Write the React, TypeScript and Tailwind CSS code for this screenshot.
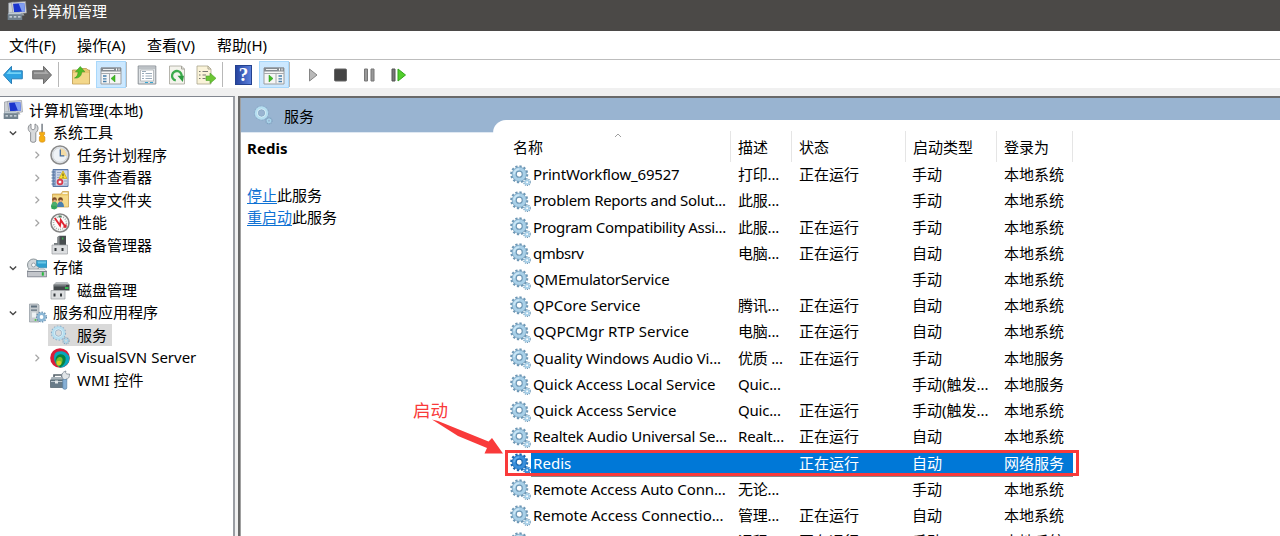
import React from "react";

type IconProps = { className?: string };

function Gear({ className = "", tone = "light" }: IconProps & { tone?: "light" | "selected" }) {
  const edge = tone === "selected" ? "#1766b0" : "#6d97b5";
  const body = tone === "selected" ? "#3a8fdb" : "#a9d0e8";
  const shine = tone === "selected" ? "#64aeea" : "#cbe6f5";
  return (
    <svg viewBox="0 0 20 20" className={className} fill="none">
      <circle cx="8.8" cy="8.800" r="7.500" stroke={edge} strokeWidth="2.200" strokeDasharray="2.100 1.827" />
      <circle cx="8.8" cy="8.800" r="4.900" stroke={body} strokeWidth="4" />
      <circle cx="8.8" cy="8.800" r="6.800" stroke={edge} strokeWidth="0.600" />
      <path d="M4 8.800a4.800 4.800 0 0 1 4.800-4.800" stroke={shine} strokeWidth="2" />
      <circle cx="8.8" cy="8.800" r="2.900" stroke={edge} strokeWidth="1.100" fill="#fff" />
      <circle cx="16.3" cy="16.400" r="3" stroke={edge} strokeWidth="1.400" strokeDasharray="1.100 0.785" />
      <circle cx="16.3" cy="16.400" r="1.800" stroke={body} strokeWidth="1.800" />
    </svg>
  );
}

function PaleGear({ className = "" }: IconProps) {
  return (
    <svg viewBox="0 0 20 20" className={className} fill="none">
      <circle cx="8.500" cy="8" r="7" stroke="#84a9c6" strokeWidth="1.200" strokeDasharray="1.600 1.500" />
      <circle cx="8.500" cy="8" r="5.200" stroke="#b5def0" strokeWidth="3" />
      <circle cx="8.500" cy="8" r="4" stroke="#e0f4fb" strokeWidth="1" />
      <circle cx="8.500" cy="8" r="3.300" stroke="#86a9c4" strokeWidth=".7" />
      <circle cx="16" cy="15.800" r="3" stroke="#7ea3c0" strokeWidth="1.300" strokeDasharray="1.100 0.785" />
      <circle cx="16" cy="15.800" r="1.700" stroke="#a8d4ea" strokeWidth="1.400" />
    </svg>
  );
}

function ComputerIcon({ className = "" }: IconProps) {
  return (
    <svg viewBox="0 0 20 20" className={className}>
      <path d="M1.500 2l5-.8v12L1.500 14z" fill="#cdd1d5" stroke="#868c93" strokeWidth=".6" />
      <path d="M9 12h7l1.500 2.500H9z" fill="#9fa5ab" />
      <path d="M4.500 1.400L18.500.5l1 11.500-13.500.8z" fill="#d6d8dc" stroke="#8a8f96" strokeWidth=".6" />
      <path d="M6 2.700l11.200-.7.8 8.600-10.900.7z" fill="#1b35cd" />
      <path d="M11.500 2.300l5.700-.3.8 8.600-3 .2z" fill="#7f9df0" />
      <path d="M.7 13.200l2-1.700h9.500l3 1.700v5.800H.7z" fill="#73838f" />
      <path d="M.7 13.200l2-1.700h9.500l3 1.700z" fill="#c1ccd3" />
      <path d="M2.500 15.200h2.500v1.200H2.500zM6.800 15.200h2.500v1.200H6.800zM11 15.200h2.500v1.200H11z" fill="#dde5ea" />
    </svg>
  );
}

function ToolsIcon({ className = "" }: IconProps) {
  return (
    <svg viewBox="0 0 20 20" className={className}>
      <path d="M4 1v4.500L6 7l2-1.500V1c2 .8 3 2.300 3 4.300S10 9 8.800 9.500V18c0 1.800-5.200 1.800-5.200 0V9.500C2 8.500 1.200 7 1.200 5.300S2.200 1.800 4 1z" fill="#d8dadc" stroke="#83878b" strokeWidth=".9" />
      <path d="M14.200.8h1.800v9h-1.800z" fill="#8e949a" />
      <path d="M12.600 9.200h5v2.300l-1 1 1.300 1.500v3.500c0 2.300-5.500 2.300-5.500 0V14l1.200-1.500-1-1z" fill="#f5ae12" stroke="#cf8510" strokeWidth=".6" />
    </svg>
  );
}

function ClockIcon({ className = "" }: IconProps) {
  return (
    <svg viewBox="0 0 20 20" className={className} fill="none">
      <circle cx="10" cy="10" r="9" fill="#eef2f6" stroke="#8b8b8b" strokeWidth="1.600" />
      <path d="M10 11V3a7.500 7.500 0 0 1 7 8z" fill="#f3dba5" />
      <circle cx="10" cy="10" r="7.300" stroke="#c9cdd1" strokeWidth=".8" />
      <path d="M10.300 4.500v6.300h4" stroke="#426b9b" strokeWidth="1.300" />
    </svg>
  );
}

function EventIcon({ className = "" }: IconProps) {
  return (
    <svg viewBox="0 0 20 20" className={className} fill="none">
      <path d="M3 1.500h15v17H3z" fill="#8fa4c9" stroke="#5977a4" />
      <path d="M6 2.500h11.500v15H6z" fill="#ccd6e8" />
      <path d="M7 4.500h4M7 7h3M7 9.500h2M14 13h3M14 16h3" stroke="#92a5c4" />
      <path d="M1.500 4h3.500M1.500 7h3.500M1.500 10h3.500M1.500 13h3.500M1.500 16h3.500" stroke="#55759e" />
      <path d="M13 3l4 7.500H9z" fill="#fae132" stroke="#c7a317" strokeWidth=".7" />
      <path d="M13 5.500v2.500M13 8.700v1" stroke="#443a12" />
      <circle cx="10" cy="14" r="3.300" fill="#d83a4b" />
      <path d="M8.800 12.800l2.400 2.400M11.200 12.800l-2.400 2.400" stroke="#fff" strokeWidth="1.200" />
    </svg>
  );
}

function SharedIcon({ className = "" }: IconProps) {
  return (
    <svg viewBox="0 0 20 20" className={className}>
      <path d="M2.500 4h8.500l1.500-2.500h6V17h-16z" fill="#eac76a" stroke="#c49a42" strokeWidth=".7" />
      <path d="M12.500 2.500h5V4h-5z" fill="#f8f7ea" />
      <path d="M3 5.500h15v11H3z" fill="#f5da8a" />
      <circle cx="4.500" cy="9.500" r="2.300" fill="#7d4b28" />
      <circle cx="10.500" cy="9.500" r="2.300" fill="#70421f" />
      <path d="M1 17c0-7 7-7 7 0z" fill="#4bad6e" />
      <path d="M7 17c0-7 7-7 7 0z" fill="#4a7fae" />
      <path d="M3.500 9.800h2.300v2H3.500zM9.500 9.800h2.300v2H9.500z" fill="#e9b58b" />
      <path d="M1 15.500l5 .5 1.500 2-3 1.500-3-.7z" fill="#32a35a" />
    </svg>
  );
}

function PerfIcon({ className = "" }: IconProps) {
  return (
    <svg viewBox="0 0 20 20" className={className} fill="none">
      <circle cx="10" cy="10" r="9" fill="#fbfbfb" stroke="#858585" strokeWidth="1.600" />
      <circle cx="10" cy="10" r="6.500" stroke="#a1b2aa" strokeWidth="1.600" strokeDasharray="1 1.200" />
      <path d="M4.800 5l5.200 7.500.8-5.500 5 7.500" stroke="#df2431" strokeWidth="1.900" />
      <path d="M12.500 14.500h4v-4z" fill="#df2431" />
      <path d="M8.500 2.500h3v2h-3z" fill="#547f62" />
    </svg>
  );
}

function DeviceIcon({ className = "" }: IconProps) {
  return (
    <svg viewBox="0 0 20 20" className={className}>
      <path d="M7.500 2L9.500.8H16V11H7.500z" fill="#484d50" />
      <path d="M7.500 2l2-1.200V11h-2z" fill="#868b8e" />
      <path d="M12 2.500h1.300v2H12z" fill="#35b64b" />
      <path d="M4 8h4v2H4z" fill="#777d80" />
      <path d="M2 10h15.500v9H2z" fill="#dcdee0" stroke="#9b9fa2" strokeWidth=".7" />
      <path d="M4.500 13h2v3h-2zM11.500 13h2v3h-2z" fill="#34393d" />
    </svg>
  );
}

function StorageIcon({ className = "" }: IconProps) {
  return (
    <svg viewBox="0 0 20 20" className={className} fill="none">
      <circle cx="6.500" cy="7" r="6" fill="#d2d7da" stroke="#899398" />
      <circle cx="6.500" cy="7" r="2" fill="#f7fafb" stroke="#9ba5ab" />
      <path d="M9.500 2.500H20v7.300h-7l-3.500-2z" fill="#2f9fce" stroke="#3b83a4" strokeWidth=".6" />
      <path d="M10.500 3.500H19v2h-8z" fill="#6cc7e5" />
      <path d="M2 11h15l3 2.500H0z" fill="#eceeef" stroke="#868d92" strokeWidth=".6" />
      <path d="M.3 13.500h19.400v5.300H.3z" fill="#c3c6cb" stroke="#676d78" strokeWidth=".7" />
      <path d="M14.800 14.200h2v3.500h-2z" fill="#28b93e" />
    </svg>
  );
}

function DiskIcon({ className = "" }: IconProps) {
  return (
    <svg viewBox="0 0 20 20" className={className}>
      <path d="M3.500 4.500L6 2h11.500l2 2.500z" fill="#b9bdc0" />
      <path d="M3.500 4.500h16v6h-16z" fill="#43484b" />
      <path d="M4 5h12v1.500H4z" fill="#73797d" />
      <path d="M15 7h3.500v2H15z" fill="#35bc52" />
      <path d="M1 10.500h14v8.500H1z" fill="#dcdee0" stroke="#999da0" strokeWidth=".7" />
      <path d="M3.500 13.500h2v3h-2zM10 13.500h2v3h-2z" fill="#34393d" />
    </svg>
  );
}

function ServerAppsIcon({ className = "" }: IconProps) {
  return (
    <svg viewBox="0 0 20 20" className={className} fill="none">
      <path d="M2.500 1h8.500l1 1v17h-9.500z" fill="#c5cbcf" stroke="#8f989f" strokeWidth=".7" />
      <path d="M4 2.500h6v2H4zM4 6.500h6v1.200H4z" fill="#60717f" />
      <path d="M5 9.500h4v5H5z" fill="#edf1f3" />
      <circle cx="8.500" cy="17" r="1" fill="#4fc64f" />
      <circle cx="14.500" cy="14" r="4.800" stroke="#668eae" strokeWidth="1.500" strokeDasharray="1.500 1.250" />
      <circle cx="14.500" cy="14" r="3.200" stroke="#8bb6d5" strokeWidth="2.600" />
      <circle cx="14.500" cy="14" r="1.200" fill="#fff" />
    </svg>
  );
}

function SvnIcon({ className = "" }: IconProps) {
  return (
    <svg viewBox="0 0 20 20" className={className}>
      <circle cx="10" cy="10" r="9.800" fill="#d91d39" />
      <path d="M5 5.500C8 2 16 2 19.500 9a9.800 9.800 0 0 1-9 10.800C4 17 3 9 5 5.500z" fill="#08a6bd" />
      <path d="M6 9.500c2-4.500 8-4 9.500 0 .8 4.500-2 8-5 9.700C5 17 5 12 6 9.500z" fill="#078241" />
      <path d="M7 11c2-3.500 6.500-2 5.500 2-.5 2.800-2 4.500-4 5.500C5 16 5.500 13 7 11z" fill="#78bd2e" />
      <circle cx="9" cy="15" r="2.300" fill="#d8c92b" />
    </svg>
  );
}

function WmiIcon({ className = "" }: IconProps) {
  return (
    <svg viewBox="0 0 20 20" className={className} fill="none">
      <path d="M4 7.500V5h8v3" stroke="#56616a" strokeWidth="1.600" />
      <path d="M1.500 7h13L14 10H.5z" fill="#a7b2b9" />
      <path d="M.5 10h13.500v7.500H.5z" fill="#687b88" stroke="#4c5d69" strokeWidth=".7" />
      <path d="M1 11.500h13" stroke="#bdc8cf" />
      <path d="M5 10.500h3v3H5z" fill="#e3e7e9" />
      <path d="M16 1c-1 2 0 3.500 3.500 3 0 4-1.500 5-3.500 5v3h-3V8.500C10.500 5.500 12 2 16 1z" fill="#e1e5e8" stroke="#78848e" strokeWidth=".8" />
      <path d="M12.800 9.500h4v8.500c0 1.800-4 1.800-4 0z" fill="#86afd5" stroke="#537ca3" strokeWidth=".6" />
    </svg>
  );
}

function Arrow({ className = "", flip = false }: IconProps & { flip?: boolean }) {
  return (
    <svg viewBox="0 0 20 20" className={className}>
      <path
        d={flip ? "M19.500 10L11.500 1.300v4.500H.7v8h10.800v5z" : "M.5 10L8.500 1.300v4.500h10.800v8H8.500v5z"}
        fill={flip ? "#888" : "#2ea3e3"}
        stroke={flip ? "#6c6c6c" : "#2a7fb8"}
        strokeWidth="1"
      />
      <path d={flip ? "M2 7.300h10.800V4.500l4 4.500H2z" : "M3.300 9l4-4.500v2.800H18V9z"} fill={flip ? "#a9a9a9" : "#73d2f6"} />
    </svg>
  );
}

function UpFolderIcon() {
  return (
    <svg viewBox="0 0 20 20" className="size-5">
      <path d="M1.500 5h6l1-1.500h7l1.500 1.500h1.500v14h-17z" fill="#e8c671" stroke="#bd9a50" strokeWidth=".8" />
      <path d="M2 8h16v10.500H2z" fill="#f3d78a" />
      <path d="M3.500 13c2.200-.8 3.500-3 3.600-6.200H4.500L9.300 1.500l4.500 5.300h-3C10.500 11 8 13.500 3.500 13z" fill="#51bd25" stroke="#3b9a22" strokeWidth=".6" />
    </svg>
  );
}

function PaneIcon({ side }: { side: "left" | "right" }) {
  return (
    <svg viewBox="0 0 22 20" className="h-5 w-[22px]">
      <path d="M1 3h20v16H1z" fill="#f6f6f6" stroke="#9b9d9f" />
      <path d="M1 2.500h20v4H1z" fill="#858b91" />
      <path d="M3 4h11v1H3z" fill="#eef0f1" />
      <path d="M16 3.500h1v2h-1zM18.500 3.500h1v2h-1z" fill="#fff" />
      <path d="M1 8.500h20" stroke="#a8abae" />
      {side === "left" ? (
        <>
          <path d="M3 11h3.500M3 13.800h3.500M3 16.500h3.500" stroke="#447da9" strokeWidth="1.300" />
          <path d="M9.500 9v9.500" stroke="#a8abae" />
          <path d="M15 10v7L11 13.500z" fill="#40bd24" stroke="#299016" strokeWidth=".5" />
        </>
      ) : (
        <>
          <path d="M15.500 11H19M15.500 13.800H19M15.500 16.500H19" stroke="#447da9" strokeWidth="1.300" />
          <path d="M13 9v9.500" stroke="#a8abae" />
          <path d="M6 10v7L10 13.500z" fill="#40bd24" stroke="#299016" strokeWidth=".5" />
        </>
      )}
    </svg>
  );
}

function PropertiesIcon() {
  return (
    <svg viewBox="0 0 20 20" className="size-5" fill="none">
      <path d="M1.200 1h17.600v18H1.200z" fill="#dfe3e6" stroke="#8a9096" />
      <path d="M2 3h16" stroke="#9ba1a6" />
      <path d="M3.500 5h13v11h-13z" fill="#fff" stroke="#a2a6aa" strokeWidth=".7" />
      <path d="M5 8.500h2M5 11h2M5 13.500h2M8.500 8.500H15M8.500 11H15M8.500 13.500H15M5 6.500h4" stroke="#9aabb9" />
      <path d="M8 17.500h3M13 17.500h3" stroke="#37a5d0" />
    </svg>
  );
}

function RefreshPageIcon() {
  return (
    <svg viewBox="0 0 20 20" className="size-5" fill="none">
      <path d="M2.500 1h12l3 3v15h-15z" fill="#f4f3ec" stroke="#a5a39b" strokeWidth=".8" />
      <path d="M14.500 1v3h3" stroke="#a5a39b" />
      <path d="M8.800 15.500A4.800 4.800 0 1 1 14.500 12" stroke="#3cab4c" strokeWidth="2.300" />
      <path d="M10.500 10.800h6.500L15.800 17z" fill="#2c9b3e" />
    </svg>
  );
}

function ExportIcon() {
  return (
    <svg viewBox="0 0 20 20" className="size-5" fill="none">
      <path d="M1 1h11l3 3v15H1z" fill="#faf3d9" stroke="#aaa48d" strokeWidth=".8" />
      <path d="M12 1v3h3" stroke="#aaa48d" />
      <path d="M3 6.500h1.500M3 10h1.500M3 13.500h1.500M6.500 6.500H12M6.500 10H10M6.500 13.500h3" stroke="#777871" strokeWidth="1.200" />
      <path d="M10 11h4V8l6 5.300-6 5.200v-3h-4z" fill="#6cc634" stroke="#4ba02c" strokeWidth=".6" />
    </svg>
  );
}

function HelpIcon() {
  return (
    <div className="flex h-[20px] w-[17px] items-center justify-center border border-[#24428f] bg-linear-to-r from-[#2744a0] to-[#5b80dc] font-['Liberation_Serif',serif] text-[19px] leading-none font-bold text-white">
      ?
    </div>
  );
}

function Separator({ className = "" }: IconProps) {
  return <div className={`h-[25px] w-px shrink-0 bg-[#b8b8b8] ${className}`} />;
}

function ActivePane({ side, className = "" }: IconProps & { side: "left" | "right" }) {
  return (
    <div className={`flex h-[27px] w-[30px] shrink-0 items-center justify-center border border-[#a9d8fb] bg-[#cce8ff] ${className}`}>
      <PaneIcon side={side} />
    </div>
  );
}

function Chevron({ open }: { open: boolean }) {
  return open ? (
    <svg viewBox="0 0 10 10" className="size-[10px]" fill="none">
      <path d="M1.800 3.500L5 6.500l3.200-3" stroke="#444" strokeWidth="1.300" />
    </svg>
  ) : (
    <svg viewBox="0 0 10 10" className="size-[10px]" fill="none">
      <path d="M3.500 1.800L6.800 5 3.500 8.200" stroke="#a5a5a5" strokeWidth="1.200" />
    </svg>
  );
}

type TreeItem = {
  label: string;
  icon: React.ReactNode;
  level: 0 | 1 | 2;
  open?: boolean;
  selected?: boolean;
};

const tree: TreeItem[] = [
  { label: "计算机管理(本地)", icon: <ComputerIcon className="size-5" />, level: 0 },
  { label: "系统工具", icon: <ToolsIcon className="size-5" />, level: 1, open: true },
  { label: "任务计划程序", icon: <ClockIcon className="size-5" />, level: 2, open: false },
  { label: "事件查看器", icon: <EventIcon className="size-5" />, level: 2, open: false },
  { label: "共享文件夹", icon: <SharedIcon className="size-5" />, level: 2, open: false },
  { label: "性能", icon: <PerfIcon className="size-5" />, level: 2, open: false },
  { label: "设备管理器", icon: <DeviceIcon className="size-5" />, level: 2 },
  { label: "存储", icon: <StorageIcon className="size-5" />, level: 1, open: true },
  { label: "磁盘管理", icon: <DiskIcon className="size-5" />, level: 2 },
  { label: "服务和应用程序", icon: <ServerAppsIcon className="size-5" />, level: 1, open: true },
  { label: "服务", icon: <PaleGear className="size-5" />, level: 2, selected: true },
  { label: "VisualSVN Server", icon: <SvnIcon className="size-5" />, level: 2, open: false },
  { label: "WMI 控件", icon: <WmiIcon className="size-5" />, level: 2 },
];

const chevronCell = ["w-[3px]", "w-[27px] pl-[8px]", "w-[50px] pl-[32px]"];

function TreeRow({ item }: { item: TreeItem }) {
  return (
    <div className="flex h-[22.5px] shrink-0 items-center">
      <div className={`flex shrink-0 items-center ${chevronCell[item.level]}`}>
        {item.open !== undefined && <Chevron open={item.open} />}
      </div>
      <div
        className={`-ml-[2px] flex h-[22px] items-center pr-[5px] pl-[2px] ${item.selected ? "bg-[#d9d9d9]" : ""}`}
      >
        {item.icon}
        <span className={`pb-px whitespace-nowrap ${item.level === 2 ? "ml-[7px]" : "ml-[6px]"}`}>{item.label}</span>
      </div>
    </div>
  );
}

type Service = {
  name: string;
  desc: string;
  status: string;
  startup: string;
  logon: string;
  fit?: string;
  selected?: boolean;
};

const services: Service[] = [
  { name: "PrintWorkflow_69527", desc: "打印...", status: "正在运行", startup: "手动", logon: "本地系统", fit: "tracking-[-0.18px]" },
  { name: "Problem Reports and Solut...", desc: "此服...", status: "", startup: "手动", logon: "本地系统", fit: "tracking-[-0.3px]" },
  { name: "Program Compatibility Assi...", desc: "此服...", status: "正在运行", startup: "手动", logon: "本地系统", fit: "tracking-[-0.34px]" },
  { name: "qmbsrv", desc: "电脑...", status: "正在运行", startup: "自动", logon: "本地系统", fit: "tracking-[-0.5px]" },
  { name: "QMEmulatorService", desc: "", status: "", startup: "手动", logon: "本地系统", fit: "tracking-[-0.21px]" },
  { name: "QPCore Service", desc: "腾讯...", status: "正在运行", startup: "自动", logon: "本地系统", fit: "tracking-[-0.02px]" },
  { name: "QQPCMgr RTP Service", desc: "电脑...", status: "正在运行", startup: "自动", logon: "本地系统", fit: "tracking-[0.02px]" },
  { name: "Quality Windows Audio Vi...", desc: "优质 ...", status: "正在运行", startup: "手动", logon: "本地服务", fit: "tracking-[-0.15px]" },
  { name: "Quick Access Local Service", desc: "Quic...", status: "", startup: "手动(触发...", logon: "本地服务", fit: "tracking-[-0.1px]" },
  { name: "Quick Access Service", desc: "Quic...", status: "正在运行", startup: "手动(触发...", logon: "本地系统", fit: "tracking-[-0.07px]" },
  { name: "Realtek Audio Universal Se...", desc: "Realt...", status: "正在运行", startup: "自动", logon: "本地系统", fit: "tracking-[-0.19px]" },
  { name: "Redis", desc: "", status: "正在运行", startup: "自动", logon: "网络服务", selected: true, fit: "tracking-[0.05px]" },
  { name: "Remote Access Auto Conn...", desc: "无论...", status: "", startup: "手动", logon: "本地系统", fit: "tracking-[-0.12px]" },
  { name: "Remote Access Connectio...", desc: "管理...", status: "正在运行", startup: "自动", logon: "本地系统", fit: "tracking-[-0.08px]" },
  { name: "Remote Desktop Configu...", desc: "远程...", status: "正在运行", startup: "手动", logon: "本地系统", fit: "tracking-[-0.15px]" },
];

function ServiceRow({ service }: { service: Service }) {
  return (
    <div className="flex h-[26.23px] shrink-0 items-center whitespace-nowrap">
      <Gear className="size-[21px] shrink-0" tone={service.selected ? "selected" : "light"} />
      <div
        className={`grid h-[26px] w-[542px] grid-cols-[205px_61px_113px_92px_70px] items-center border-b pb-px pl-[2px] ${
          service.selected ? "border-[#8a8a8a] bg-[#0078d7] text-white" : "border-transparent"
        }`}
      >
        <span className={service.fit}>{service.name}</span>
        <span className="tracking-[-0.2px]">{service.desc}</span>
        <span>{service.status}</span>
        <span>{service.startup}</span>
        <span>{service.logon}</span>
      </div>
    </div>
  );
}

function Annotation() {
  return (
    <>
      <div className="absolute top-[399px] left-[413px] text-[17.500px] leading-[22px] text-[#f93a3a]">启动</div>
      <svg viewBox="0 0 76 42" className="absolute top-[416px] left-[430px] h-[42px] w-[76px]">
        <path d="M2 3.500L8 5 58.500 25.500 62 22 73 37.500 54.500 37.500 57 32 28 20z" fill="#f93a3a" />
      </svg>
      <div className="absolute top-[450px] left-[505px] h-[26px] w-[574px] border-[3px] border-[#f93a3a]" />
    </>
  );
}

const columns = ["名称", "描述", "状态", "启动类型", "登录为"];

export default function App() {
  return (
    <div className="relative flex h-[536px] w-[1280px] flex-col overflow-hidden bg-[#f0f0f0] font-['Noto_Sans','Noto_Sans_CJK_SC',sans-serif] text-[15px] leading-[22px] text-black">
      <header className="flex h-[31px] shrink-0 items-start bg-[#4b4947] pl-[7px] text-white">
        <ComputerIcon className="mt-[1px] size-5" />
        <span className="ml-[5px]">计算机管理</span>
      </header>

      <nav className="flex h-[29px] shrink-0 items-center border-b border-[#bdbdbd] bg-white pb-px pl-[9px]">
        <span className="w-[68px]">文件(F)</span>
        <span className="w-[70px]">操作(A)</span>
        <span className="w-[70px]">查看(V)</span>
        <span>帮助(H)</span>
      </nav>

      <div className="flex h-[28px] shrink-0 items-center bg-white pt-px pl-[3px]">
        <Arrow className="size-5" />
        <Arrow className="ml-[9px] size-5" flip />
        <Separator className="ml-[6px]" />
        <div className="ml-[12px]"><UpFolderIcon /></div>
        <ActivePane side="left" className="ml-[5px]" />
        <Separator />
        <div className="ml-[10px]"><PropertiesIcon /></div>
        <div className="ml-[10px]"><RefreshPageIcon /></div>
        <div className="ml-[9px]"><ExportIcon /></div>
        <Separator className="ml-[6px]" />
        <div className="ml-[12px]"><HelpIcon /></div>
        <ActivePane side="right" className="ml-[7px]" />
        <Separator />
        <svg viewBox="0 0 100 16" className="ml-[17px] h-4 w-[100px]">
          <path d="M2.500 2l7.500 6-7.500 6z" fill="#b9b9b9" stroke="#858585" />
          <rect x="27.500" y="2" width="12" height="12" rx="1" fill="#444" stroke="#666" />
          <path d="M57.500 2h3v12h-3zM64 2h3v12h-3z" fill="#999" stroke="#777" />
          <path d="M85 2h3v12h-3z" fill="#777" stroke="#555" />
          <path d="M91 2l7.500 6-7.500 6z" fill="#52cf2c" stroke="#31a51c" />
        </svg>
      </div>

      <main className="flex min-h-0 flex-1 pt-[8px]">
        <aside className="flex w-[235px] shrink-0 flex-col border-t border-r-2 border-t-[#828790] border-r-[#9a9da3] bg-white pt-[2px]">
          {tree.map((item) => (
            <TreeRow key={item.label} item={item} />
          ))}
        </aside>

        <section className="ml-[3px] flex min-w-0 flex-1 border-t-2 border-l-2 border-t-[#696969] border-l-[#696969] bg-[#99b4d1]">
          <div className="flex min-w-0 flex-1 border-l border-l-[#a0a0a0]">
            <div className="flex w-[252px] shrink-0 flex-col bg-white">
              <div className="flex h-[35px] shrink-0 items-center border-b border-[#dfe8f2] bg-[#99b4d1] pl-[12px]">
                <PaleGear className="size-5" />
                <span className="ml-[11px] pt-px">服务</span>
              </div>
              <div className="pt-[4px] pl-[6px]">
                <h2 className="text-[15px] font-bold tracking-[0.05px]">Redis</h2>
                <p className="mt-[25px] h-[21.5px]"><span className="text-[#0f72d4] underline underline-offset-2">停止</span>此服务</p>
                <p><span className="text-[#0f72d4] underline underline-offset-2">重启动</span>此服务</p>
              </div>
            </div>
            <div className="flex min-w-0 flex-1 flex-col pt-[22px]">
              <div className="flex min-h-0 flex-1 flex-col overflow-hidden rounded-tl-[13px] bg-white">
                <div className="relative mt-[11px] grid h-[31px] w-[580px] shrink-0 grid-cols-[238px_61px_114px_91px_76px] items-center">
                  <svg viewBox="0 0 8 5" className="absolute top-[2px] left-[121px] h-[5px] w-2" fill="none">
                    <path d="M1 4l3-3 3 3" stroke="#888" strokeWidth=".8" />
                  </svg>
                  {columns.map((label, i) => (
                    <div key={label} className={`flex h-full items-center border-r border-[#e5e5e5] ${i === 0 ? "pl-[20px]" : "pl-[7px]"}`}>
                      {label}
                    </div>
                  ))}
                </div>
                <div className="flex min-h-0 flex-1 flex-col overflow-hidden pl-[17px]">
                  {services.map((service) => (
                    <ServiceRow key={service.name} service={service} />
                  ))}
                </div>
              </div>
            </div>
          </div>
        </section>
      </main>
      <Annotation />
    </div>
  );
}
